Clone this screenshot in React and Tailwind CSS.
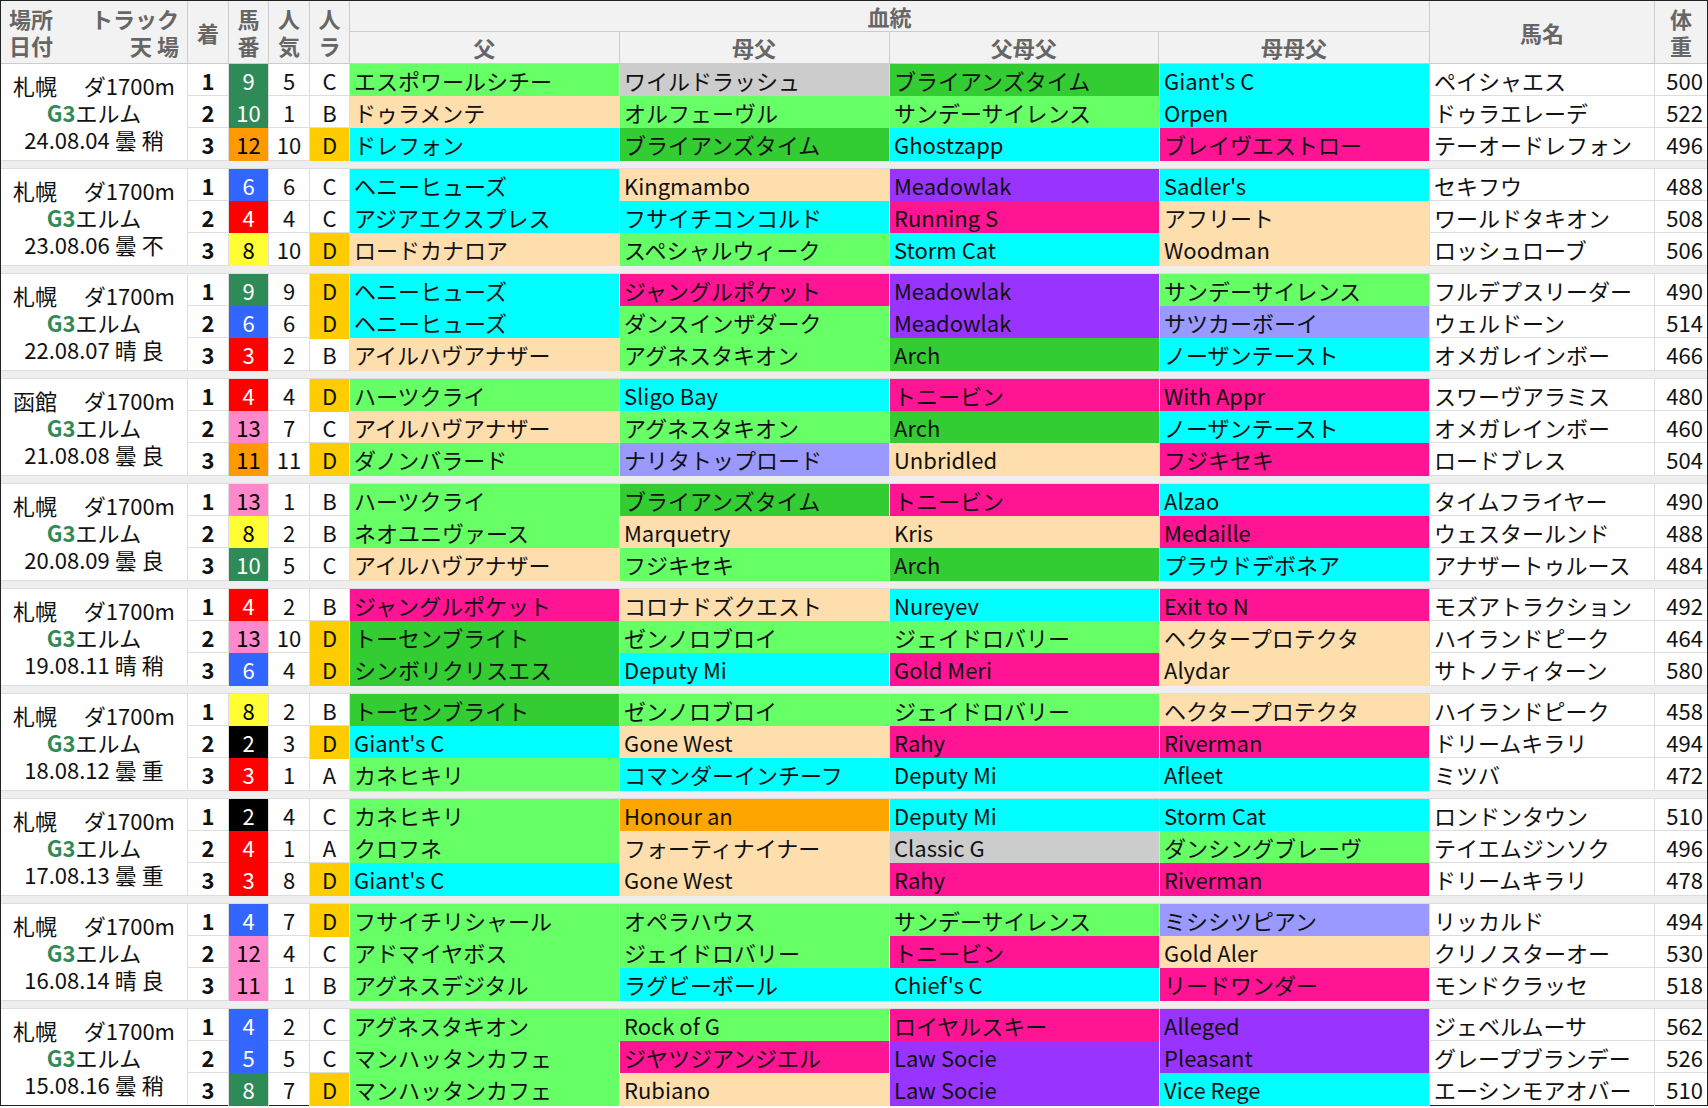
const BG = {
  G: 'bg-[#66ff66]', D: 'bg-[#33cc33]', P: 'bg-[#ffdead]', C: 'bg-[#00ffff]', K: 'bg-[#ff1493]',
  V: 'bg-[#9933ff]', L: 'bg-[#9999ff]', S: 'bg-[#cccccc]', O: 'bg-[#ffa500]',
};

const NUM = {
  g: 'bg-[#2e8b57] text-white', b: 'bg-[#3366ff] text-white', r: 'bg-[#ff0000] text-white',
  y: 'bg-[#ffff33] text-black', p: 'bg-[#ff88cc] text-black', o: 'bg-[#ff9900] text-black',
  k: 'bg-black text-white',
};

// [num, color, pop, rank, [sire, c], [bms, c], [ssire, c], [dmsire, c], name, weight]
const RACES = [
  { place: '札幌', date: '24.08.04', w: '曇', t: '稍', rows: [
    [9, 'g', 5, 'C', ['エスポワールシチー', 'G'], ['ワイルドラッシュ', 'S'], ['ブライアンズタイム', 'D'], ["Giant's C", 'C'], 'ペイシャエス', 500],
    [10, 'g', 1, 'B', ['ドゥラメンテ', 'P'], ['オルフェーヴル', 'G'], ['サンデーサイレンス', 'G'], ['Orpen', 'C'], 'ドゥラエレーデ', 522],
    [12, 'o', 10, 'D', ['ドレフォン', 'C'], ['ブライアンズタイム', 'D'], ['Ghostzapp', 'C'], ['ブレイヴエストロー', 'K'], 'テーオードレフォン', 496],
  ] },
  { place: '札幌', date: '23.08.06', w: '曇', t: '不', rows: [
    [6, 'b', 6, 'C', ['ヘニーヒューズ', 'C'], ['Kingmambo', 'P'], ['Meadowlak', 'V'], ["Sadler's", 'C'], 'セキフウ', 488],
    [4, 'r', 4, 'C', ['アジアエクスプレス', 'C'], ['フサイチコンコルド', 'C'], ['Running S', 'K'], ['アフリート', 'P'], 'ワールドタキオン', 508],
    [8, 'y', 10, 'D', ['ロードカナロア', 'P'], ['スペシャルウィーク', 'G'], ['Storm Cat', 'C'], ['Woodman', 'P'], 'ロッシュローブ', 506],
  ] },
  { place: '札幌', date: '22.08.07', w: '晴', t: '良', rows: [
    [9, 'g', 9, 'D', ['ヘニーヒューズ', 'C'], ['ジャングルポケット', 'K'], ['Meadowlak', 'V'], ['サンデーサイレンス', 'G'], 'フルデプスリーダー', 490],
    [6, 'b', 6, 'D', ['ヘニーヒューズ', 'C'], ['ダンスインザダーク', 'G'], ['Meadowlak', 'V'], ['サツカーボーイ', 'L'], 'ウェルドーン', 514],
    [3, 'r', 2, 'B', ['アイルハヴアナザー', 'P'], ['アグネスタキオン', 'G'], ['Arch', 'D'], ['ノーザンテースト', 'C'], 'オメガレインボー', 466],
  ] },
  { place: '函館', date: '21.08.08', w: '曇', t: '良', rows: [
    [4, 'r', 4, 'D', ['ハーツクライ', 'G'], ['Sligo Bay', 'C'], ['トニービン', 'K'], ['With Appr', 'K'], 'スワーヴアラミス', 480],
    [13, 'p', 7, 'C', ['アイルハヴアナザー', 'P'], ['アグネスタキオン', 'G'], ['Arch', 'D'], ['ノーザンテースト', 'C'], 'オメガレインボー', 460],
    [11, 'o', 11, 'D', ['ダノンバラード', 'G'], ['ナリタトップロード', 'L'], ['Unbridled', 'P'], ['フジキセキ', 'K'], 'ロードブレス', 504],
  ] },
  { place: '札幌', date: '20.08.09', w: '曇', t: '良', rows: [
    [13, 'p', 1, 'B', ['ハーツクライ', 'G'], ['ブライアンズタイム', 'D'], ['トニービン', 'K'], ['Alzao', 'C'], 'タイムフライヤー', 490],
    [8, 'y', 2, 'B', ['ネオユニヴァース', 'G'], ['Marquetry', 'P'], ['Kris', 'P'], ['Medaille', 'K'], 'ウェスタールンド', 488],
    [10, 'g', 5, 'C', ['アイルハヴアナザー', 'P'], ['フジキセキ', 'G'], ['Arch', 'D'], ['プラウドデボネア', 'C'], 'アナザートゥルース', 484],
  ] },
  { place: '札幌', date: '19.08.11', w: '晴', t: '稍', rows: [
    [4, 'r', 2, 'B', ['ジャングルポケット', 'K'], ['コロナドズクエスト', 'P'], ['Nureyev', 'C'], ['Exit to N', 'K'], 'モズアトラクション', 492],
    [13, 'p', 10, 'D', ['トーセンブライト', 'D'], ['ゼンノロブロイ', 'G'], ['ジェイドロバリー', 'G'], ['ヘクタープロテクタ', 'P'], 'ハイランドピーク', 464],
    [6, 'b', 4, 'D', ['シンボリクリスエス', 'D'], ['Deputy Mi', 'C'], ['Gold Meri', 'K'], ['Alydar', 'P'], 'サトノティターン', 580],
  ] },
  { place: '札幌', date: '18.08.12', w: '曇', t: '重', rows: [
    [8, 'y', 2, 'B', ['トーセンブライト', 'D'], ['ゼンノロブロイ', 'G'], ['ジェイドロバリー', 'G'], ['ヘクタープロテクタ', 'P'], 'ハイランドピーク', 458],
    [2, 'k', 3, 'D', ["Giant's C", 'C'], ['Gone West', 'P'], ['Rahy', 'K'], ['Riverman', 'K'], 'ドリームキラリ', 494],
    [3, 'r', 1, 'A', ['カネヒキリ', 'G'], ['コマンダーインチーフ', 'C'], ['Deputy Mi', 'C'], ['Afleet', 'C'], 'ミツバ', 472],
  ] },
  { place: '札幌', date: '17.08.13', w: '曇', t: '重', rows: [
    [2, 'k', 4, 'C', ['カネヒキリ', 'G'], ['Honour an', 'O'], ['Deputy Mi', 'C'], ['Storm Cat', 'C'], 'ロンドンタウン', 510],
    [4, 'r', 1, 'A', ['クロフネ', 'G'], ['フォーティナイナー', 'P'], ['Classic G', 'S'], ['ダンシングブレーヴ', 'G'], 'テイエムジンソク', 496],
    [3, 'r', 8, 'D', ["Giant's C", 'C'], ['Gone West', 'P'], ['Rahy', 'K'], ['Riverman', 'K'], 'ドリームキラリ', 478],
  ] },
  { place: '札幌', date: '16.08.14', w: '晴', t: '良', rows: [
    [4, 'b', 7, 'D', ['フサイチリシャール', 'G'], ['オペラハウス', 'G'], ['サンデーサイレンス', 'G'], ['ミシシツピアン', 'L'], 'リッカルド', 494],
    [12, 'p', 4, 'C', ['アドマイヤボス', 'G'], ['ジェイドロバリー', 'G'], ['トニービン', 'K'], ['Gold Aler', 'P'], 'クリノスターオー', 530],
    [11, 'p', 1, 'B', ['アグネスデジタル', 'G'], ['ラグビーボール', 'C'], ["Chief's C", 'C'], ['リードワンダー', 'K'], 'モンドクラッセ', 518],
  ] },
  { place: '札幌', date: '15.08.16', w: '曇', t: '稍', rows: [
    [4, 'b', 2, 'C', ['アグネスタキオン', 'G'], ['Rock of G', 'G'], ['ロイヤルスキー', 'K'], ['Alleged', 'V'], 'ジェベルムーサ', 562],
    [5, 'b', 5, 'C', ['マンハッタンカフェ', 'G'], ['ジヤツジアンジエル', 'K'], ['Law Socie', 'V'], ['Pleasant', 'V'], 'グレープブランデー', 526],
    [8, 'g', 7, 'D', ['マンハッタンカフェ', 'G'], ['Rubiano', 'P'], ['Law Socie', 'V'], ['Vice Rege', 'C'], 'エーシンモアオバー', 510],
  ] },
];

const COLS = 'grid grid-cols-[41px_40px_41px_40px_270px_270px_270px_270px_225px_52px]';

function Row({ r, place }) {
  const [num, nc, pop, rank, p1, p2, p3, p4, name, weight] = r;
  return (
    <div className={`${COLS} h-[32px] border-b border-[#dddddd] last:border-b-0`}>
      <div className="flex items-center justify-center font-bold border-r border-[#dddddd]">{place}</div>
      <div className={`flex items-center justify-center border-r border-[#dddddd] ${NUM[nc]}`}>{num}</div>
      <div className="flex items-center justify-center border-r border-[#dddddd]">{pop}</div>
      <div className={`flex items-center justify-center border-r border-[#dddddd] ${rank === 'D' ? 'bg-[#ffcc00]' : ''}`}>{rank}</div>
      {[p1, p2, p3, p4].map(([t, c], i) => (
        <div key={i} className={`flex items-center pl-1 whitespace-nowrap overflow-hidden border-r border-[#dddddd] ${BG[c]}`}>{t}</div>
      ))}
      <div className="flex items-center pl-1 whitespace-nowrap overflow-hidden border-r border-[#dddddd]">{name}</div>
      <div className="flex items-center justify-end pr-1">{weight}</div>
    </div>
  );
}

function Race({ race }) {
  return (
    <div className="flex">
      <div className="w-[187px] flex flex-col items-center justify-center leading-[27px] border-r border-[#dddddd]">
        <div className="w-full flex justify-between px-3"><span>{race.place}</span><span>ダ1700m</span></div>
        <div><span className="text-[#2e8b57] font-bold">G3</span>エルム</div>
        <div>{race.date} {race.w} {race.t}</div>
      </div>
      <div className="flex flex-col">
        {race.rows.map((r, i) => <Row key={i} r={r} place={i + 1} />)}
      </div>
    </div>
  );
}

export default function App() {
  return (
    <div className="w-[1708px] bg-white text-[22px] text-[#111] border border-[#222]" style={{ fontFamily: '"Noto Sans CJK JP", "Noto Sans", sans-serif' }}>
      <div className="flex bg-[#f2f2f2] text-[#666] font-bold border-b border-[#cccccc] h-[63px] leading-[27px]">
        <div className="w-[187px] flex flex-col justify-center px-2 border-r border-[#cccccc]">
          <div className="flex justify-between"><span>場所</span><span>トラック</span></div>
          <div className="flex justify-between"><span>日付</span><span>天 場</span></div>
        </div>
        <div className="w-[41px] flex items-center justify-center border-r border-[#cccccc]">着</div>
        <div className="w-[40px] flex flex-col items-center justify-center border-r border-[#cccccc]"><span>馬</span><span>番</span></div>
        <div className="w-[41px] flex flex-col items-center justify-center border-r border-[#cccccc]"><span>人</span><span>気</span></div>
        <div className="w-[40px] flex flex-col items-center justify-center border-r border-[#cccccc]"><span>人</span><span>ラ</span></div>
        <div className="w-[1080px] flex flex-col border-r border-[#cccccc]">
          <div className="h-[31px] flex items-center justify-center border-b border-[#cccccc]">血統</div>
          <div className="flex-1 grid grid-cols-4">
            {['父', '母父', '父母父', '母母父'].map((t) => (
              <div key={t} className="flex items-center justify-center border-r border-[#cccccc] last:border-r-0">{t}</div>
            ))}
          </div>
        </div>
        <div className="w-[225px] flex items-center justify-center border-r border-[#cccccc]">馬名</div>
        <div className="flex-1 flex flex-col items-center justify-center"><span>体</span><span>重</span></div>
      </div>
      {RACES.map((race, i) => (
        <div key={i}>
          {i > 0 && <div className="h-[9px] bg-[#eeeeee] border-y border-[#dddddd]" />}
          <Race race={race} />
        </div>
      ))}
    </div>
  );
}
